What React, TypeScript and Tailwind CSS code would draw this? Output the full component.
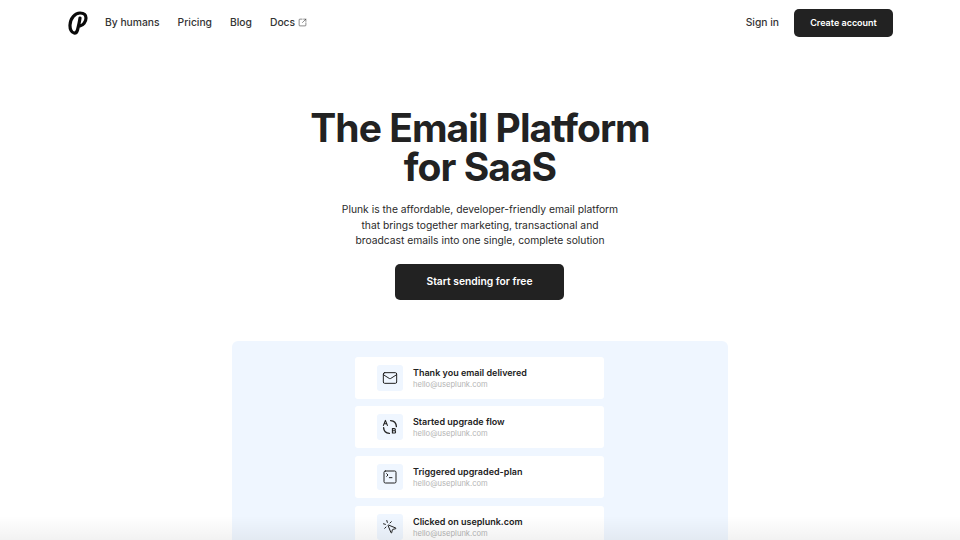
import React from 'react';
import { Mail, SquareTerminal, MousePointerClick, SquareArrowOutUpRight } from 'lucide-react';

const events = [
    { title: 'Thank you email delivered', icon: 'mail' },
    { title: 'Started upgrade flow', icon: 'ab' },
    { title: 'Triggered upgraded-plan', icon: 'terminal' },
    { title: 'Clicked on useplunk.com', icon: 'click' },
];

function AbIcon() {
    return (
        <svg width="16" height="16" viewBox="0 0 16 16" fill="none" stroke="currentColor" strokeWidth="1.3" strokeLinecap="round" strokeLinejoin="round">
            {/* arcs */}
            <path d="M8.6 1.6C11.8 1.8 14.2 4 14.4 7.6" />
            <path d="M7.4 14.4C4.2 14.2 1.8 12 1.6 8.6" />
            {/* A */}
            <path d="M1.4 6.4L3.4 1.4L5.4 6.4M2.1 4.8h2.6" strokeWidth="1.1" />
            {/* B */}
            <path d="M10.4 9.6h1.9a1.1 1.1 0 0 1 0 2.2h-1.9zM10.4 11.8h2.1a1.1 1.1 0 0 1 0 2.2h-2.1z" strokeWidth="1.1" />
        </svg>
    );
}

function EventIcon({ name }: { name: string }) {
    if (name === 'mail') return <Mail size={16} strokeWidth={1.5} />;
    if (name === 'terminal') return <SquareTerminal size={16} strokeWidth={1.5} />;
    if (name === 'click') return <MousePointerClick size={16} strokeWidth={1.5} />;
    return <AbIcon />;
}

export default function App() {
    return (
        <div className="relative h-[540px] overflow-hidden bg-white text-[#222] font-['Inter',sans-serif]">
            {/* Top Nav */}
            <nav className="ml-[68px] flex h-[45px] w-[825px] items-center justify-between">
                <div className="flex items-center">
                    <svg width="20" height="24" viewBox="0 0 20 24" fill="none" stroke="#0a0a0a" strokeWidth="3.2" strokeLinecap="round" strokeLinejoin="round">
                        <path d="M12 7C11.5 11 10.5 15 9.5 19C9 21 7.5 22.2 6 22C3.5 21.7 1.8 18 2 14C2.3 7.5 7 2 12 2C15.5 2 18 3.7 18 7C18 11 15 14.5 12 15" />
                    </svg>
                    <div className="ml-[17px] flex items-center gap-[18px] text-[10.3px] font-medium text-[#333]">
                        <span>By humans</span>
                        <span>Pricing</span>
                        <span>Blog</span>
                        <span className="flex items-center gap-[3px]">
                            Docs
                            <SquareArrowOutUpRight size={9} strokeWidth={1.5} />
                        </span>
                    </div>
                </div>
                <div className="flex items-center gap-[15px]">
                    <span className="text-[10.3px] font-medium text-[#333]">Sign in</span>
                    <button className="h-[28px] w-[99px] rounded-[5px] bg-[#222] text-[9px] font-semibold text-white">
                        Create account
                    </button>
                </div>
            </nav>

            {/* Hero */}
            <div className="mt-[64px] flex flex-col items-center">
                <h1 className="text-center text-[39px] leading-[38.5px] font-bold tracking-[-0.025em] text-[#222]">
                    The Email Platform
                    <br />
                    for SaaS
                </h1>
                <p className="mt-[16px] text-center text-[10.3px] leading-[15.5px] text-[#2a2a2a]">
                    Plunk is the affordable, developer-friendly email platform
                    <br />
                    that brings together marketing, transactional and
                    <br />
                    broadcast emails into one single, complete solution
                </p>
                <button className="mt-[15px] mr-[1px] h-[36px] w-[169px] rounded-[5px] bg-[#222] text-[10.3px] font-semibold text-white">
                    Start sending for free
                </button>
            </div>

            {/* Events panel */}
            <div className="mx-auto mt-[41px] flex w-[496px] flex-col rounded-t-[6px] bg-blue-50 pt-[16px] pb-4 pl-[123px]">
                <div className="flex flex-col gap-[7.75px]">
                    {events.map((event) => (
                        <div key={event.title} className="flex h-[42px] w-[249px] items-center gap-[10px] rounded-[3px] bg-white pl-[22px]">
                            <div className="flex h-[26px] w-[26px] items-center justify-center rounded-[3px] bg-blue-50 text-[#222]">
                                <EventIcon name={event.icon} />
                            </div>
                            <div className="mt-[1px] flex flex-col">
                                <span className="text-[9px] leading-[12px] font-semibold text-[#222]">{event.title}</span>
                                <span className="text-[7.6px] leading-[11px] text-[#b4b4b4]">hello@useplunk.com</span>
                            </div>
                        </div>
                    ))}
                </div>
            </div>

            {/* Bottom fade */}
            <div className="absolute inset-x-0 bottom-0 h-[24px] bg-gradient-to-b from-transparent to-[#0000000d]" />
        </div>
    );
}
